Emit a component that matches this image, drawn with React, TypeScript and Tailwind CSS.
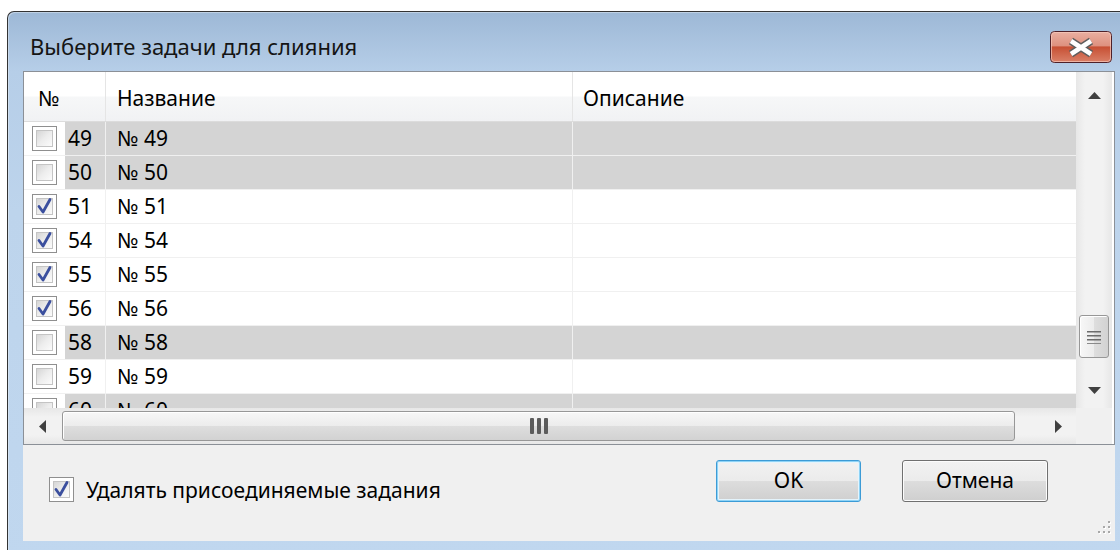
import React from "react";

type Row = { n: number; checked: boolean; gray: boolean };

const rows: Row[] = [
  { n: 49, checked: false, gray: true },
  { n: 50, checked: false, gray: true },
  { n: 51, checked: true, gray: false },
  { n: 54, checked: true, gray: false },
  { n: 55, checked: true, gray: false },
  { n: 56, checked: true, gray: false },
  { n: 58, checked: false, gray: true },
  { n: 59, checked: false, gray: false },
  { n: 60, checked: false, gray: true },
];

function CheckBox({ checked }: { checked: boolean }) {
  return (
    <div className="relative w-[25px] h-[25px] shrink-0 border border-[#8f8f8f] bg-white p-[3px]">
      <div className="w-full h-full border border-[#c4c4c4] bg-[linear-gradient(135deg,#d6d6d6_0%,#ededed_50%,#fbfbfb_100%)]" />
      {checked && (
        <svg className="absolute -left-px -top-px" width="25" height="25" viewBox="0 0 25 25">
          <path
            d="M7 12.5 L11 18 L18 5.5"
            fill="none"
            stroke="#3b4f9e"
            strokeWidth="2.8"
            strokeLinecap="round"
            strokeLinejoin="round"
          />
        </svg>
      )}
    </div>
  );
}

function CloseButton() {
  return (
    <svg width="62" height="32" viewBox="0 0 62 32">
      <defs>
        <linearGradient id="closeFill" x1="0" y1="0" x2="0" y2="1">
          <stop offset="0" stopColor="#eab0a2" />
          <stop offset="0.46" stopColor="#de917f" />
          <stop offset="0.5" stopColor="#c75034" />
          <stop offset="1" stopColor="#da8169" />
        </linearGradient>
      </defs>
      <rect x="0.5" y="0.5" width="61" height="31" rx="4" fill="url(#closeFill)" stroke="#4e2129" />
      <rect x="1.5" y="1.5" width="59" height="29" rx="3" fill="none" stroke="#f6cabd" strokeOpacity="0.7" />
      <path d="M21 10 L41 23 M41 10 L21 23" stroke="#5e5e5e" strokeWidth="7.5" strokeLinecap="butt" />
      <path d="M21 10 L41 23 M41 10 L21 23" stroke="#ffffff" strokeWidth="4.5" strokeLinecap="butt" />
    </svg>
  );
}

function Arrow({ dir }: { dir: "up" | "down" | "left" | "right" }) {
  if (dir === "up")
    return (
      <svg width="13" height="7" viewBox="0 0 13 7">
        <polygon points="0,7 6.5,0 13,7" fill="#404040" />
      </svg>
    );
  if (dir === "down")
    return (
      <svg width="13" height="7" viewBox="0 0 13 7">
        <polygon points="0,0 13,0 6.5,7" fill="#404040" />
      </svg>
    );
  if (dir === "left")
    return (
      <svg width="7" height="13" viewBox="0 0 7 13">
        <polygon points="7,0 7,13 0,6.5" fill="#404040" />
      </svg>
    );
  return (
    <svg width="7" height="13" viewBox="0 0 7 13">
      <polygon points="0,0 7,6.5 0,13" fill="#404040" />
    </svg>
  );
}

function ListRow({ row }: { row: Row }) {
  const fill = row.gray ? "bg-[#d4d4d4]" : "bg-white";
  return (
    <div className="flex h-[34px] shrink-0 border-b border-[#f0f0f0]">
      <div className="w-[41px] flex items-center pl-[8px] bg-white">
        <CheckBox checked={row.checked} />
      </div>
      <div className={`w-[40px] flex items-center pl-[3px] ${fill}`}>{row.n}</div>
      <div className="w-px bg-[#f0f0f0]" />
      <div className={`w-[466px] flex items-center pl-[11px] ${fill}`}>№ {row.n}</div>
      <div className="w-px bg-[#f0f0f0]" />
      <div className={`flex-1 ${fill}`} />
    </div>
  );
}

export default function App() {
  return (
    <div className="w-[1120px] h-[550px] overflow-hidden bg-white pl-[7px] pt-[11px] font-['Noto_Sans',sans-serif] text-[21px] text-black">
      <div className="w-[1123px] h-[560px] border-l border-t border-[#333333] rounded-tl-[7px] bg-[linear-gradient(#9db8d6_0px,#b6cee8_59px,#bdd4ec_200px,#c0d7ef_100%)] shadow-[inset_1px_1px_0_rgba(255,255,255,0.35)]">
        {/* title bar */}
        <div className="h-[59px] flex items-start pt-[19px] pl-[22px] pr-[18px]">
          <div className="leading-[30px] text-[22px] text-[#151515]">Выберите задачи для слияния</div>
          <div className="ml-auto">
            <CloseButton />
          </div>
        </div>

        {/* client area */}
        <div className="px-[15px]">
          <div className="w-[1092px] h-[470px] bg-[#f0f0f0] flex flex-col relative">
            {/* list view */}
            <div className="h-[374px] border border-[#8b9097] bg-white grid grid-cols-[1052px_36px] grid-rows-[336px_36px]">
              <div className="flex flex-col overflow-hidden">
                <div className="flex h-[50px] shrink-0 border-b border-[#dcdcdc] bg-[linear-gradient(#ffffff_0%,#ffffff_48%,#f6f7f8_52%,#f1f2f4_100%)]">
                  <div className="w-[81px] flex items-center pl-[14px] pt-[4px]">№</div>
                  <div className="w-px bg-[#e5e5e5]" />
                  <div className="w-[466px] flex items-center pl-[11px] pt-[4px]">Название</div>
                  <div className="w-px bg-[#e5e5e5]" />
                  <div className="flex-1 flex items-center pl-[10px] pt-[4px]">Описание</div>
                </div>
                <div className="flex-1 flex flex-col overflow-hidden">
                  {rows.map((r) => (
                    <ListRow key={r.n} row={r} />
                  ))}
                </div>
              </div>

              {/* vertical scrollbar */}
              <div className="flex flex-col bg-[linear-gradient(90deg,#e7e7e7,#f2f2f2_25%,#f2f2f2_75%,#e7e7e7)]">
                <div className="h-[36px] flex justify-center pt-[20px]">
                  <Arrow dir="up" />
                </div>
                <div className="flex-1">
                  <div className="mt-[207px] mx-[3px] h-[43px] rounded-[3px] border border-[#979797] bg-[linear-gradient(90deg,#f7f7f7,#ececec_50%,#dedede_50%,#d2d2d2)] shadow-[inset_1px_1px_0_#ffffff] flex items-center justify-center">
                    <svg width="14" height="14" viewBox="0 0 14 14">
                      <rect x="0" y="1" width="14" height="1.5" fill="#6b6b6b" />
                      <rect x="0" y="5" width="14" height="1.5" fill="#6b6b6b" />
                      <rect x="0" y="9" width="14" height="1.5" fill="#6b6b6b" />
                      <rect x="0" y="13" width="14" height="1" fill="#8a8a8a" />
                    </svg>
                  </div>
                </div>
                <div className="h-[36px] flex items-center justify-center">
                  <Arrow dir="down" />
                </div>
              </div>

              {/* horizontal scrollbar */}
              <div className="flex items-center bg-[linear-gradient(#e7e7e7,#f2f2f2_25%,#f2f2f2_75%,#e7e7e7)]">
                <div className="w-[36px] h-full flex items-center justify-center">
                  <Arrow dir="left" />
                </div>
                <div className="ml-[2px] w-[953px] h-[30px] rounded-[3px] border border-[#979797] bg-[linear-gradient(#f7f7f7,#ececec_50%,#dedede_50%,#d2d2d2)] shadow-[inset_1px_1px_0_#ffffff] flex items-center justify-center">
                  <svg width="18" height="16" viewBox="0 0 18 16">
                    <rect x="0" y="0" width="4" height="16" rx="1" fill="#5c5c5c" />
                    <rect x="7" y="0" width="4" height="16" rx="1" fill="#5c5c5c" />
                    <rect x="14" y="0" width="4" height="16" rx="1" fill="#5c5c5c" />
                  </svg>
                </div>
                <div className="flex-1" />
                <div className="w-[36px] h-full flex items-center justify-center">
                  <Arrow dir="right" />
                </div>
              </div>

              <div className="bg-[#f0f0f0]" />
            </div>

            {/* footer */}
            <div className="flex flex-1">
              <div className="ml-[26px] mt-[32px] h-[25px] flex items-center gap-[12px]">
                <CheckBox checked />
                <span className="leading-[25px] pt-[2px]">Удалять присоединяемые задания</span>
              </div>
              <div className="ml-auto mr-[67px] mt-[15px] flex gap-[41px] h-[42px]">
                <button className="w-[145px] h-[42px] rounded-[3px] border border-[#3c9bd6] shadow-[inset_0_0_0_1px_#8fd3f6,inset_0_0_0_2px_#e4f4fc] bg-[linear-gradient(#f2f2f2,#ebebeb_50%,#dddddd_50%,#cfcfcf)] text-[21px]">
                  OK
                </button>
                <button className="w-[146px] h-[42px] rounded-[3px] border border-[#707070] shadow-[inset_0_0_0_1px_#fcfcfc] bg-[linear-gradient(#f2f2f2,#ebebeb_50%,#dddddd_50%,#cfcfcf)] text-[21px]">
                  Отмена
                </button>
              </div>
            </div>

            {/* size grip */}
            <svg className="absolute right-[3px] bottom-[4px]" width="16" height="16" viewBox="0 0 16 16">
              {[
                [12, 0],
                [7, 5],
                [12, 5],
                [2, 10],
                [7, 10],
                [12, 10],
              ].map(([x, y]) => (
                <g key={`${x}-${y}`}>
                  <rect x={x + 1} y={y + 1} width="2" height="2" fill="#ffffff" />
                  <rect x={x} y={y} width="2" height="2" fill="#a8a8a8" />
                </g>
              ))}
            </svg>
          </div>
        </div>
      </div>
    </div>
  );
}
